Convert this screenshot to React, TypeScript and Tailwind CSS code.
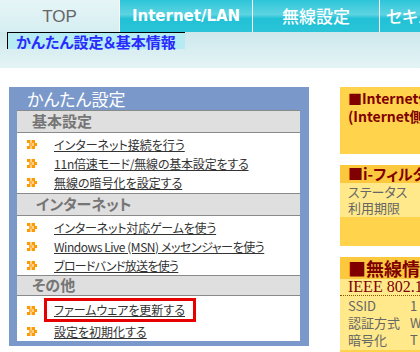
import React from "react";

const jp = { fontFamily: '"Noto Sans CJK JP", "Liberation Sans", sans-serif', fontFeatureSettings: '"palt"' } as React.CSSProperties;

function Bullet() {
  return (
    <svg width="11" height="9" viewBox="0 0 11 9" className="shrink-0">
      <rect x="0" y="0" width="3" height="3" fill="#ff9900" />
      <rect x="3" y="0" width="2" height="3" fill="#ffd08a" />
      <rect x="5" y="0" width="3" height="3" fill="#ff9900" />
      <rect x="2" y="3" width="3" height="3" fill="#ffb347" />
      <rect x="7" y="3" width="3" height="3" fill="#ff9900" />
      <rect x="5" y="3" width="2" height="3" fill="#ffd08a" />
      <rect x="0" y="6" width="3" height="3" fill="#ff9900" />
      <rect x="3" y="6" width="2" height="3" fill="#ffd08a" />
      <rect x="5" y="6" width="3" height="3" fill="#ff9900" />
    </svg>
  );
}

function Item({ text, boxed, tight }: { text: string; boxed?: boolean; tight?: string }) {
  return (
    <div className={`flex items-center pl-[10px] ${boxed ? "h-[24px]" : "h-[19px]"}`}>
      <Bullet />
      {boxed ? (
        <span className="ml-[6px] border-[3px] border-[#e60000] pl-[7px] pr-[8px] h-[24px] flex items-center">
          <span className="text-[12px] text-[#333] underline leading-[14px] whitespace-nowrap" style={jp}>{text}</span>
        </span>
      ) : (
        <span className={`ml-[16px] text-[12px] text-[#333] underline leading-[14px] whitespace-nowrap ${tight ?? ""}`} style={jp}>{text}</span>
      )}
    </div>
  );
}

function SectionHeader({ text, h = 23, pl = 15 }: { text: string; h?: number; pl?: number }) {
  return (
    <div
      className="bg-[#dfdfdf] border-y border-[#8a8a8a] flex items-center text-[15px] font-bold text-[#757575]"
      style={{ ...jp, height: h, paddingLeft: pl }}
    >
      {text}
    </div>
  );
}

const navCyan = "bg-[linear-gradient(#2dc5d9,#5dd4e2_45%,#22c1d6_58%,#2ac4d8)]";

export default function App() {
  return (
    <div className="w-[420px] h-[352px] overflow-hidden bg-white relative">
      {/* top nav */}
      <div className="flex h-[32px] w-[520px]">
        <div
          className="w-[119px] bg-[linear-gradient(#e6f5f7,#d6eef1)] flex items-center justify-center text-[17px] text-[#666] pt-[2px]"
          style={{ fontFamily: '"Liberation Sans", Arial, sans-serif' }}
        >
          TOP
        </div>
        <div className="w-[1px] bg-white" />
        <div
          className={`w-[132px] ${navCyan} flex items-center justify-center text-[15px] font-bold text-white`}
          style={{ fontFamily: '"DejaVu Sans", Verdana, sans-serif' }}
        >
          Internet/LAN
        </div>
        <div className="w-[1px] bg-white" />
        <div className={`w-[126px] ${navCyan} flex items-center justify-center text-[17px] font-medium text-white`} style={jp}>
          無線設定
        </div>
        <div className="w-[1px] bg-white" />
        <div className={`w-[126px] ${navCyan} flex items-center pl-[6px] text-[17px] font-medium text-white`} style={jp}>
          セキュリティ
        </div>
      </div>
      {/* sub band */}
      <div className="h-[36px] bg-[linear-gradient(#cde8ec,#e4f4f6)] pl-[7px]">
        <div
          className="w-[178px] h-[17px] bg-[#b5ebf2] border-t border-l border-black flex items-center pl-[8px] text-[15px] font-bold text-[#2a2aff] leading-none"
          style={jp}
        >
          かんたん設定＆基本情報
        </div>
      </div>
      {/* main */}
      <div className="flex items-start pt-[19px] pl-[9px] gap-[31px]">
        {/* left panel */}
        <div className="w-[300px] bg-[#7a99ca] pl-[8px] pr-[9px] pb-[5px] shrink-0">
          <div className="h-[23px] flex items-center pl-[10px] text-[17px] text-white leading-none" style={jp}>
            かんたん設定
          </div>
          <div className="bg-white h-[231px]">
            <SectionHeader text="基本設定" />
            <div className="pt-[2px] pb-[1px]">
              <Item text="インターネット接続を行う" />
              <Item text="11n倍速モード/無線の基本設定をする" tight="tracking-[-0.2px]" />
              <Item text="無線の暗号化を設定する" />
            </div>
            <SectionHeader text="インターネット" pl={19} />
            <div className="pt-[2px]">
              <Item text="インターネット対応ゲームを使う" tight="tracking-[-0.2px]" />
              <Item text="Windows Live (MSN) メッセンジャーを使う" tight="tracking-[-0.45px]" />
              <Item text="ブロードバンド放送を使う" tight="tracking-[-0.7px]" />
            </div>
            <SectionHeader text="その他" h={21} />
            <div className="pt-[2px]">
              <Item text="ファームウェアを更新する" boxed />
              <Item text="設定を初期化する" />
            </div>
          </div>
        </div>
        {/* right column */}
        <div className="w-[160px] shrink-0 flex flex-col gap-[11px]">
          <div className="h-[67px] bg-[#ffd34b] pl-[8px] pt-[2px] text-[#800000] font-bold text-[14px] leading-[18px]" style={jp}>
            <div className="whitespace-nowrap">■Internet側の状態</div>
            <div className="whitespace-nowrap">(Internet側IPアドレス)</div>
          </div>
          <div className="h-[81px] bg-[#ffd44c]" style={jp}>
            <div className="h-[18px] bg-[#fcc83e] pl-[8px] flex items-center text-[15px] font-bold text-[#800000] whitespace-nowrap leading-[18px]">
              ■i-フィルター
            </div>
            <div className="bg-[#ffe98b] pl-[8px] text-[13px] text-[#666] py-[1px]">
              <div className="h-[16px] leading-[16px]">ステータス</div>
              <div className="h-[16px] leading-[16px]">利用期限</div>
            </div>
          </div>
          <div className="h-[100px] bg-[#ffd44c]" style={jp}>
            <div className="h-[22px] bg-[#fcc83e] pl-[8px] flex items-center text-[18px] font-bold text-[#800000] whitespace-nowrap leading-[22px]">
              ■無線情報
            </div>
            <div
              className="h-[17px] bg-[#ffe98b] pl-[8px] text-[16px] text-[#800000] border-b border-dotted border-[#8a5a00] whitespace-nowrap leading-[16px]"
              style={{ fontFamily: '"Liberation Serif", "Times New Roman", serif' }}
            >
              IEEE 802.11n
            </div>
            <div className="bg-[#ffe98b] pl-[8px] text-[13px] text-[#666] pt-[1px] pb-[2px]">
              <div className="flex h-[17px] leading-[17px]"><span className="w-[62px]">SSID</span><span>1</span></div>
              <div className="flex h-[17px] leading-[17px]"><span className="w-[62px]">認証方式</span><span>W</span></div>
              <div className="flex h-[17px] leading-[17px]"><span className="w-[62px]">暗号化</span><span>T</span></div>
            </div>
          </div>
        </div>
      </div>
    </div>
  );
}
